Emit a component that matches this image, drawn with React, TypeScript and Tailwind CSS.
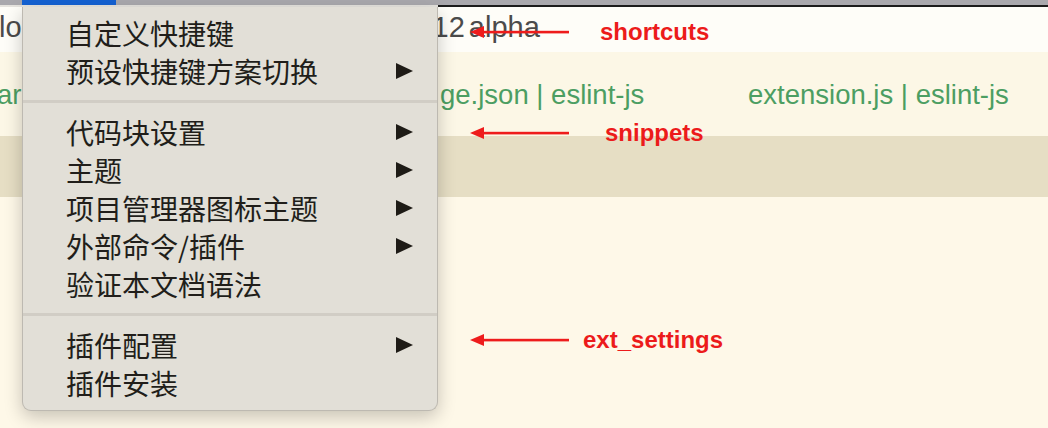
import React from "react";

const cjk = { fontFamily: '"Noto Sans CJK SC", "Noto Sans", sans-serif' };
const latin = { fontFamily: '"Liberation Sans", Arial, sans-serif' };

type Item = { label: string; sub?: boolean } | "sep";

const items: Item[] = [
  { label: "自定义快捷键" },
  { label: "预设快捷键方案切换", sub: true },
  "sep",
  { label: "代码块设置", sub: true },
  { label: "主题", sub: true },
  { label: "项目管理器图标主题", sub: true },
  { label: "外部命令/插件", sub: true },
  { label: "验证本文档语法" },
  "sep",
  { label: "插件配置", sub: true },
  { label: "插件安装" },
];

function RedArrow() {
  return (
    <svg width="100" height="14" viewBox="0 0 100 14" className="shrink-0">
      <polygon points="0,7 14,1 14,13" fill="#ee1c1c" />
      <rect x="12" y="5.8" width="87" height="2.6" fill="#ee1c1c" />
    </svg>
  );
}

function Note({ label, gap }: { label: string; gap: string }) {
  return (
    <div className={`flex h-[24px] items-center ${gap}`}>
      <RedArrow />
      <span className="text-[24px] font-bold leading-none text-[#ec1b1b]" style={latin}>
        {label}
      </span>
    </div>
  );
}

export default function App() {
  return (
    <div className="relative h-[428px] w-[1048px] overflow-hidden bg-[#fef8e8]">
      {/* editor background */}
      <div className="flex h-[5px] bg-[#a9a8ad]">
        <div className="ml-[22px] w-[94px] bg-[#1461d2]" />
      </div>
      <div className="flex h-[2px]">
        <div className="w-[438px] bg-[#e5e3de]" />
        <div className="flex-1 bg-[#1b1b1b]" />
      </div>
      <div className="flex h-[45px] items-center bg-[#fefdf8] pb-[4px] text-[29px] leading-none text-[#4b4b4b]" style={latin}>
        <span className="ml-[-1px]">lo</span>
        <span className="ml-[411px]">12</span>
        <span className="ml-[4px]">alpha</span>
      </div>
      <div className="flex h-[84px] items-center bg-[#fcf7e6] pt-[2px] text-[27.5px] leading-none text-[#4c9e62]" style={latin}>
        <span className="ml-[-3px] w-[443px]">ar</span>
        <span className="w-[308px]">ge.json | eslint-js</span>
        <span>extension.js | eslint-js</span>
      </div>
      <div className="h-[61px] bg-[#e6dec4]" />

      {/* annotations */}
      <div className="absolute left-[470px] top-[20px]">
        <Note label="shortcuts" gap="gap-[30px]" />
      </div>
      <div className="absolute left-[470px] top-[121px]">
        <Note label="snippets" gap="gap-[35px]" />
      </div>
      <div className="absolute left-[470px] top-[328px]">
        <Note label="ext_settings" gap="gap-[13px]" />
      </div>

      {/* context menu */}
      <div
        className="absolute left-[22px] top-[7px] flex h-[404px] w-[416px] flex-col rounded-b-[9px] border border-t-0 border-[#bdb9b1] bg-[#e2dfd7] pt-[7px] shadow-[0_6px_18px_rgba(0,0,0,0.22)]"
        style={cjk}
      >
        {items.map((it, i) =>
          it === "sep" ? (
            <div key={i} className="flex h-[23px] items-center">
              <div className="h-[3px] w-full bg-[#d1cdc5]" />
            </div>
          ) : (
            <div key={i} className="flex h-[38px] items-center justify-between pl-[43px] pr-[24px] text-[28px] leading-none text-[#211e1a]">
              <span>{it.label}</span>
              {it.sub && (
                <svg width="17" height="16" viewBox="0 0 17 16">
                  <polygon points="0,0 17,8 0,16" fill="#1e1b16" />
                </svg>
              )}
            </div>
          )
        )}
      </div>
    </div>
  );
}
